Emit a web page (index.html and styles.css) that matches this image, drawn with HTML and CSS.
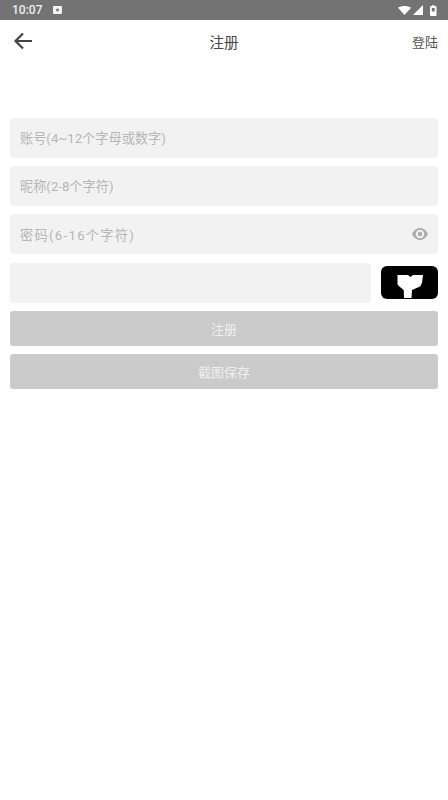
FILE: index.html
```html
<!DOCTYPE html>
<html lang="zh-CN">
<head>
<meta charset="utf-8">
<title>注册</title>
<link rel="stylesheet" href="styles.css">
</head>
<body>
<div class="status">
  <span class="time">10:07</span>
  <svg class="notif" width="9" height="8" viewBox="0 0 9 8"><path fill="#f2f2f2" fill-rule="evenodd" d="M1 0h7a1 1 0 0 1 1 1v6a1 1 0 0 1-1 1H1a1 1 0 0 1-1-1V1a1 1 0 0 1 1-1zM3.200 2.700v2.600h2.600V2.700z"/></svg>
  <span class="spacer"></span>
  <svg class="wifi" width="13" height="9" viewBox="0 0 13 9"><path fill="#fff" d="M0 1.700C1.700.6 4 0 6.500 0S11.300.6 13 1.700L6.500 9z"/></svg>
  <svg class="cell" width="10" height="10" viewBox="0 0 10 10"><path fill="#fff" d="M10 0v10H0z"/></svg>
  <svg class="batt" width="6.500" height="11" viewBox="0 0 6.500 11"><path fill="#fff" fill-rule="evenodd" d="M2.200 0h2.100v1h1.200a1 1 0 0 1 1 1v8a1 1 0 0 1-1 1h-4.500a1 1 0 0 1-1-1V2a1 1 0 0 1 1-1h1.200zM1.800 3v3.500h2.900V3z"/></svg>
</div>
<header class="nav">
  <svg class="back" width="20" height="18" viewBox="0 0 20 18"><path fill="none" stroke="#444" stroke-width="2.200" d="M19 9H2.500M10 1.500 2.500 9l7.500 7.500"/></svg>
  <h1 class="title">注册</h1>
  <a class="login">登陆</a>
</header>
<main class="form">
  <div class="field"><span class="ph">账号(4~12个字母或数字)</span></div>
  <div class="field"><span class="ph">昵称(2-8个字符)</span></div>
  <div class="field between">
    <span class="ph ph-wide">密码(6-16个字符)</span>
    <svg class="eye" width="16" height="12" viewBox="0 0 16 12"><path fill="#adadad" fill-rule="evenodd" d="M8 0c3.400 0 6.400 2.400 8 6-1.600 3.600-4.600 6-8 6S1.600 9.600 0 6c1.600-3.600 4.600-6 8-6zm0 1.800a4.200 4.200 0 1 0 0 8.400 4.200 4.200 0 0 0 0-8.400zm0 1.900a2.300 2.300 0 1 1 0 4.600 2.300 2.300 0 0 1 0-4.600z"/></svg>
  </div>
  <div class="captcha-row">
    <div class="field grow"></div>
    <div class="captcha">
      <svg class="shape" width="26" height="23" viewBox="0 0 26 23"><path fill="#fff" d="M.5 0H11l2.500 2L16 0h10l-1 8-2 3.500-8 3.500-.5 8H7l-.3-8L3 12 .5 9.500z"/></svg>
    </div>
  </div>
  <button class="btn">注册</button>
  <button class="btn">截图保存</button>
</main>
</body>
</html>
```
FILE: styles.css
```css
* { box-sizing: border-box; }
html, body { margin: 0; padding: 0; }
body {
  width: 448px;
  height: 800px;
  background: #fff;
  overflow: hidden;
  font-family: "Roboto", "Noto Sans CJK SC", sans-serif;
}
.status {
  height: 20px;
  background: #737373;
  display: flex;
  align-items: center;
  padding: 0 11.500px 0 12px;
  color: #eee;
  font-size: 12px;
  font-weight: 500;
}
.notif { margin-left: 11px; }
.spacer { flex: 1; }
.wifi { margin-right: 2px; }
.cell { margin-right: 7px; }
.nav {
  height: 44px;
  display: grid;
  grid-template-columns: 1fr auto 1fr;
  align-items: center;
  padding: 0 10px 2px;
  margin-bottom: 53.600px;
}
.back { margin-left: 3px; }
.title {
  margin: 0;
  font-size: 14.500px;
  font-weight: 400;
  color: #444;
}
.login {
  font-size: 13px;
  color: #555;
  justify-self: end;
}
.form {
  display: flex;
  flex-direction: column;
  gap: 8.400px;
  padding: 0 10px;
}
.field {
  height: 40px;
  background: #f2f2f2;
  border-radius: 3px;
  display: flex;
  align-items: center;
  padding: 0 10px;
}
.between { justify-content: space-between; }
.ph { font-size: 13.200px; color: #b6b6b6; }
.ph-wide { letter-spacing: 1.300px; }
.captcha-row { display: flex; gap: 10px; align-items: flex-start; }
.grow { flex: 1; }
.captcha {
  width: 57px;
  height: 33.500px;
  margin-top: 3px;
  background: #000;
  border-radius: 6px;
  display: flex;
  justify-content: center;
  align-items: flex-start;
  overflow: hidden;
  padding: 9px 0 0 0;
}
.btn {
  height: 34.800px;
  border: 0;
  padding: 0;
  background: #cbcbcb;
  color: #eee;
  border-radius: 3px;
  font: inherit;
  font-size: 13px;
}
```
